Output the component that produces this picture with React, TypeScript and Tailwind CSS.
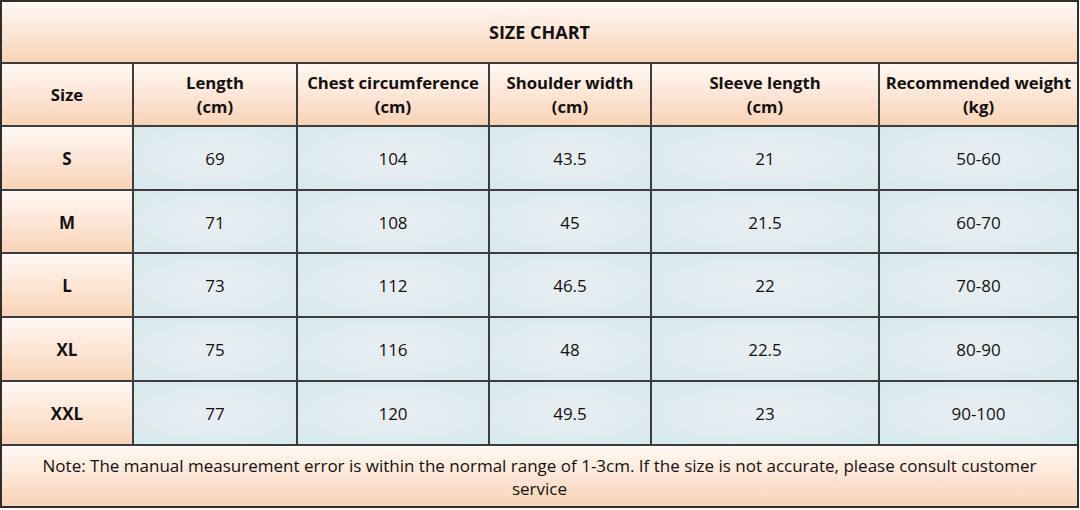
import React from "react";

const peach = "bg-[linear-gradient(to_bottom,#fff8f3_0%,#fde6d6_50%,#f8d3b6_100%)]";
const blue = "bg-[radial-gradient(ellipse_at_center,#eaeef0_0%,#e1ecf0_45%,#d6e9ee_100%)]";

const rows = [
  ["S", "69", "104", "43.5", "21", "50-60"],
  ["M", "71", "108", "45", "21.5", "60-70"],
  ["L", "73", "112", "46.5", "22", "70-80"],
  ["XL", "75", "116", "48", "22.5", "80-90"],
  ["XXL", "77", "120", "49.5", "23", "90-100"],
];

const headers: [string, string | null][] = [
  ["Size", null],
  ["Length", "(cm)"],
  ["Chest circumference", "(cm)"],
  ["Shoulder width", "(cm)"],
  ["Sleeve length", "(cm)"],
  ["Recommended weight", "(kg)"],
];

export default function App() {
  return (
    <div className="w-[1080px] h-[510px] bg-white" style={{ fontFamily: '"Open Sans", "Noto Sans", sans-serif' }}>
      <div className="w-[1079px] h-[508px] border-2 border-[#2e2e2e] bg-[#3d3d3d] grid grid-cols-[130px_162px_190px_160px_226px_197px] grid-rows-[60px_61px_62px_61px_62px_62px_62px_60px] gap-[2px] text-[#111]">
        <div className={`col-span-6 ${peach} flex items-center justify-center font-bold text-[18px]`}>SIZE CHART</div>
        {headers.map(([a, b]) => (
          <div key={a} className={`${peach} flex flex-col items-center justify-center font-bold text-[16.7px] leading-[24px] text-center`}>
            <span>{a}</span>
            {b && <span>{b}</span>}
          </div>
        ))}
        {rows.map((r) =>
          r.map((c, i) =>
            i === 0 ? (
              <div key={r[0] + i} className={`${peach} flex items-center justify-center font-bold text-[17px] pt-[2px]`}>{c}</div>
            ) : (
              <div key={r[0] + i} className={`${blue} flex items-center justify-center text-[17px] pt-[2px]`}>{c}</div>
            )
          )
        )}
        <div className={`col-span-6 ${peach} flex items-center justify-center text-center text-[17px] leading-[23px] px-[28px] pt-[2px]`}>
          Note: The manual measurement error is within the normal range of 1-3cm. If the size is not accurate, please consult customer service
        </div>
      </div>
    </div>
  );
}
